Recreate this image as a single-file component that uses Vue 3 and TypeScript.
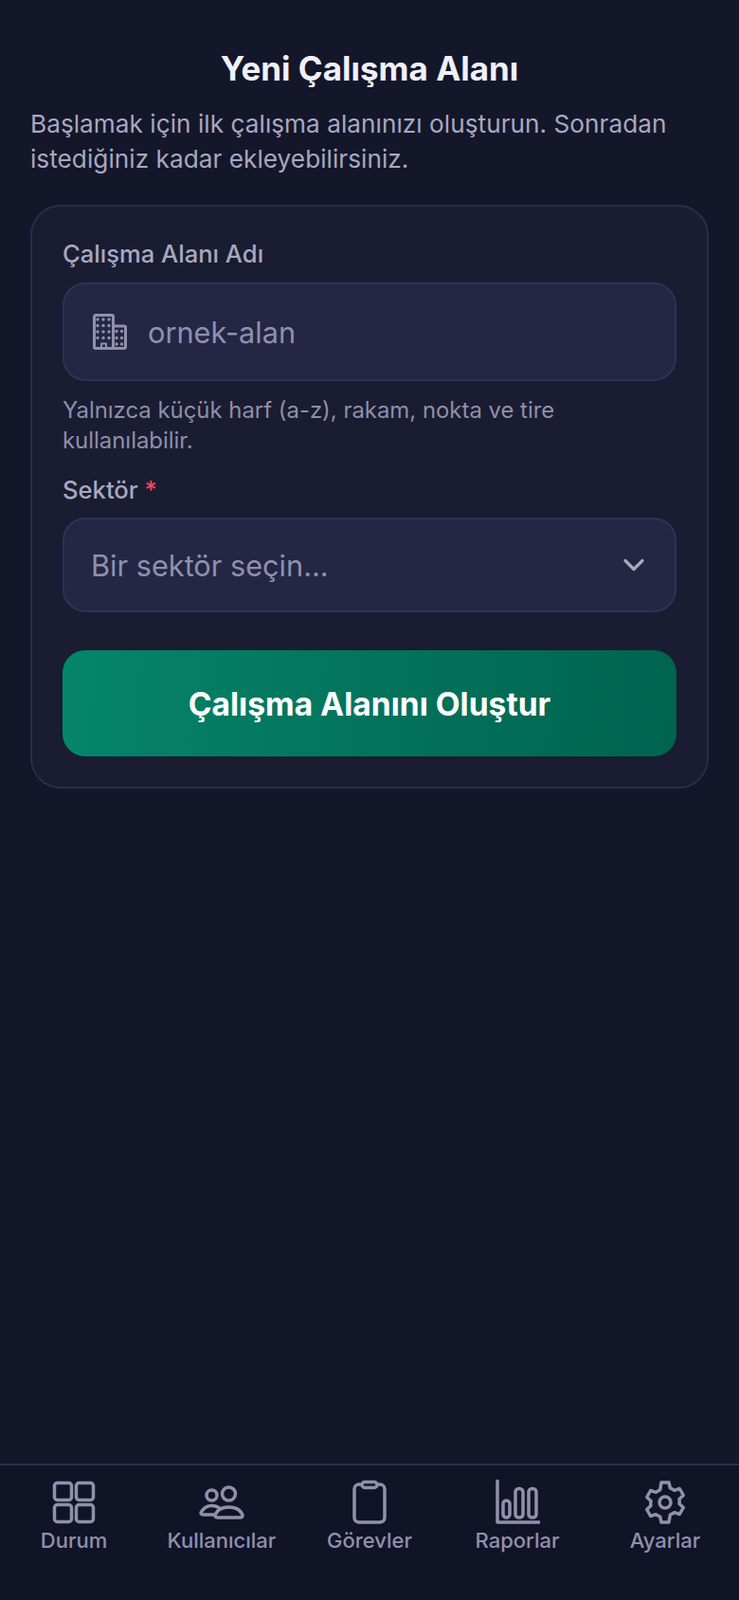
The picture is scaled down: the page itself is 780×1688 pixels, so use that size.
<script setup lang="ts">
import { ref } from 'vue'

const workspaceName = ref('')
const sector = ref('')

const navItems = ['Durum', 'Kullanıcılar', 'Görevler', 'Raporlar', 'Ayarlar']

const buildingDots = [
  [5, 6], [11, 6], [17, 6],
  [5, 12.5], [11, 12.5], [17, 12.5],
  [5, 19], [11, 19], [17, 19],
  [5, 25.5], [11, 25.5], [17, 25.5],
  [25, 18.5], [30.5, 18.5],
  [25, 25.5], [30.5, 25.5],
  [25, 32], [30.5, 32],
]
</script>

<template>
  <div class="page">
    <main class="content">
      <h1 class="title">Yeni Çalışma Alanı</h1>
      <p class="intro">Başlamak için ilk çalışma alanınızı oluşturun. Sonradan istediğiniz kadar ekleyebilirsiniz.</p>

      <form class="card" @submit.prevent>
        <label class="label" for="workspace">Çalışma Alanı Adı</label>
        <div class="field name-field">
          <svg class="building" viewBox="0 0 36 38" width="36" height="38" fill="none" stroke="currentColor" stroke-width="3" stroke-linejoin="round">
            <path d="M1.500 36.500V3a1.500 1.500 0 0 1 1.500-1.500h17a1.500 1.500 0 0 1 1.500 1.500v33.500" />
            <path d="M21.500 13h11.500a1.500 1.500 0 0 1 1.500 1.500v20.500a1.500 1.500 0 0 1-1.500 1.500H3a1.500 1.500 0 0 1-1.500-1.500" />
            <path d="M9 36.500v-5h5v5" stroke-width="2" />
            <g fill="currentColor" stroke="none">
              <circle v-for="c in buildingDots" :key="c.join()" :cx="c[0]" :cy="c[1]" r="1.700" />
            </g>
          </svg>
          <input id="workspace" v-model="workspaceName" class="control" placeholder="ornek-alan" />
        </div>
        <p class="hint">Yalnızca küçük harf (a-z), rakam, nokta ve tire kullanılabilir.</p>

        <label class="label sector-label" for="sector">Sektör <span class="required">*</span></label>
        <div class="field select-field">
          <select id="sector" v-model="sector" class="control select">
            <option value="" disabled>Bir sektör seçin...</option>
          </select>
          <svg class="chevron" viewBox="0 0 24 24" width="24" height="24" fill="none" stroke="currentColor" stroke-width="3.200" stroke-linecap="round" stroke-linejoin="round">
            <path d="M3 7.500 12 16.500 21 7.500" />
          </svg>
        </div>

        <button class="submit" type="submit">Çalışma Alanını Oluştur</button>
      </form>
    </main>

    <nav class="nav">
      <a v-for="(item, i) in navItems" :key="item" class="nav-item">
        <svg viewBox="0 0 48 48" width="48" height="48" fill="none" stroke="currentColor" stroke-width="3.500" stroke-linecap="round" stroke-linejoin="round">
          <g v-if="i === 0">
            <rect x="3.500" y="4.500" width="18" height="18" rx="3" />
            <rect x="26.500" y="4.500" width="18" height="18" rx="3" />
            <rect x="3.500" y="27.500" width="18" height="18" rx="3" />
            <rect x="26.500" y="27.500" width="18" height="18" rx="3" />
          </g>
          <g v-else-if="i === 1">
            <circle cx="13.500" cy="17.500" r="5.500" />
            <circle cx="31.500" cy="16" r="7" />
            <path d="M17 38H4.500c-2 0-3-1.500-2-3C5 31 9 28.500 13.500 28.500c2.500 0 5 .5 7.500 2" />
            <path d="M19.500 41c-2 0-3-1.500-2.200-3.500C19.500 33 25 30 31.500 30s12 3 14.200 7.500c.8 2-.2 3.500-2.200 3.500Z" />
          </g>
          <g v-else-if="i === 2">
            <path d="M16 6h-3a5 5 0 0 0-5 5v30a5 5 0 0 0 5 5h22a5 5 0 0 0 5-5V11a5 5 0 0 0-5-5h-3" />
            <rect x="16" y="3.500" width="16" height="6" rx="3" />
          </g>
          <g v-else-if="i === 3">
            <path d="M3 2.500v43.500h44" />
            <rect x="9" y="23" width="7" height="18" rx="3.500" />
            <rect x="22" y="10.500" width="8" height="30.500" rx="3.500" />
            <rect x="36" y="10.500" width="8" height="30.500" rx="3.500" />
          </g>
          <g v-else transform="translate(0 1)">
            <circle cx="24" cy="24" r="6" />
            <path d="M20 3h8l1.300 5.800a16 16 0 0 1 4.400 2.500l5.600-1.800 4 7-4.300 4a16 16 0 0 1 0 5l4.300 4-4 7-5.600-1.800a16 16 0 0 1-4.400 2.500L28 45h-8l-1.300-5.800a16 16 0 0 1-4.400-2.500l-5.600 1.800-4-7 4.300-4a16 16 0 0 1 0-5l-4.300-4 4-7 5.600 1.800a16 16 0 0 1 4.400-2.500Z" />
          </g>
        </svg>
        <span>{{ item }}</span>
      </a>
    </nav>
  </div>
</template>

<style>
body {
  background: #14162a;
}
</style>

<style scoped>
.page {
  display: flex;
  flex-direction: column;
  height: 1688px;
  font-family: Inter, "Liberation Sans", sans-serif;
  background: #14162a;
  color: #a8a8c0;
}

.content {
  flex: 1;
  padding: 48px 32px 0;
}

.title {
  margin: 0 0 16px;
  text-align: center;
  font-size: 35px;
  line-height: 48px;
  font-weight: 700;
  color: #f0f0f8;
}

.intro {
  margin: 0 0 30px;
  font-size: 26.2px;
  line-height: 37px;
  letter-spacing: 0.03px;
  color: #a8a8c0;
}

.card {
  padding: 32px;
  border: 2px solid #2a2c4d;
  border-radius: 32px;
  background: #1a1c32;
}

.label {
  display: block;
  margin-bottom: 12px;
  font-size: 25.6px;
  line-height: 36px;
  font-weight: 500;
  color: #a8a8c0;
}

.sector-label {
  margin-bottom: 11px;
}

.required {
  color: #f0455c;
}

.field {
  display: flex;
  align-items: center;
  box-sizing: border-box;
  border: 2px solid #2f3158;
  border-radius: 24px;
  background: #242644;
}

.name-field {
  gap: 20px;
  height: 104px;
  padding: 0 30px;
}

.building {
  flex: none;
  color: #9090ad;
}

.select-field {
  position: relative;
  height: 100px;
}

.control {
  flex: 1;
  min-width: 0;
  border: 0;
  outline: 0;
  background: transparent;
  font: inherit;
  font-size: 30.7px;
  color: #9090ad;
}

.control::placeholder {
  color: #9090ad;
  opacity: 1;
}

.select {
  height: 100%;
  padding: 0 28px;
  appearance: none;
}

.chevron {
  position: absolute;
  top: 36px;
  right: 31px;
  color: #a8a8c0;
  pointer-events: none;
}

.hint {
  margin: 15px 0 18px;
  font-size: 23.9px;
  line-height: 32px;
  color: #8f8fa8;
}

.submit {
  display: block;
  width: 100%;
  height: 112px;
  margin-top: 40px;
  border: 0;
  border-radius: 24px;
  background: linear-gradient(95deg, #05856a, #00634e);
  font: inherit;
  font-size: 33.6px;
  font-weight: 700;
  color: #fff;
}

.nav {
  display: flex;
  height: 144px;
  padding-top: 14px;
  box-sizing: border-box;
  border-top: 2px solid #2a2c4d;
  background: #111327;
}

.nav-item {
  display: flex;
  flex-direction: column;
  align-items: center;
  gap: 3px;
  flex: 1;
  font-size: 22px;
  line-height: 28px;
  font-weight: 500;
  color: #9090ad;
}
</style>
